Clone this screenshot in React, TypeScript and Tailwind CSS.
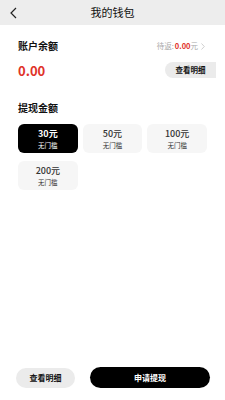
import React from "react";

const amounts = [
  { v: "30元", active: true },
  { v: "50元", active: false },
  { v: "100元", active: false },
  { v: "200元", active: false },
];

export default function App() {
  return (
    <div
      className="w-[225px] h-[400px] bg-white flex flex-col text-[#111]"
      style={{ fontFamily: '"Noto Sans CJK SC", "Noto Sans", sans-serif' }}
    >
      <div className="h-[25px] bg-[#ededed] flex items-center relative shrink-0">
        <svg className="absolute left-[9px] top-[7px]" width="9" height="12" viewBox="0 0 9 12">
          <path d="M7 1 L2 6 L7 11" fill="none" stroke="#222" strokeWidth="1.2" />
        </svg>
        <div className="w-full text-center text-[11px] leading-none">我的钱包</div>
      </div>

      <div className="flex items-center justify-between pl-[18px] pr-[20px] mt-[16px]">
        <div className="text-[10px] font-bold leading-none">账户余额</div>
        <div className="flex items-center text-[7.5px] leading-none text-[#aaa]">
          <span>待返:</span>
          <span className="text-[#e0332a] font-bold ml-[1px]">0.00</span>
          <span>元</span>
          <svg className="ml-[3px]" width="4" height="7" viewBox="0 0 4 7">
            <path d="M0.5 0.5 L3.3 3.5 L0.5 6.5" fill="none" stroke="#bbb" strokeWidth="0.7" />
          </svg>
        </div>
      </div>

      <div className="flex items-center justify-between pl-[18px] pr-[9px] mt-[11px]">
        <div className="text-[13px] font-bold text-[#e0332a] leading-none">0.00</div>
        <div className="w-[51px] h-[16px] bg-[#ebebeb] rounded-l-full flex items-center justify-center text-[7.5px] font-bold leading-none">
          查看明细
        </div>
      </div>

      <div className="pl-[18px] mt-[25px] text-[10px] font-bold leading-none">提现金额</div>

      <div className="grid grid-cols-3 gap-x-[5px] gap-y-[8px] pl-[18px] pr-[18px] mt-[11px]">
        {amounts.map((a) => (
          <div
            key={a.v}
            className={
              "h-[29px] rounded-[6px] flex flex-col items-center justify-center " +
              (a.active ? "bg-black text-white" : "bg-[#f6f6f6] text-[#333]")
            }
          >
            <div className={"text-[9px] leading-none " + (a.active ? "font-bold" : "font-medium")}>{a.v}</div>
            <div className="text-[6.5px] leading-none mt-[4px]">无门槛</div>
          </div>
        ))}
      </div>

      <div className="flex-1" />

      <div className="flex items-center pl-[16px] pr-[15px] mb-[12px] gap-[15px]">
        <div className="w-[59px] h-[20px] rounded-full bg-[#ebebeb] flex items-center justify-center text-[8px] font-bold leading-none">
          查看明细
        </div>
        <div className="flex-1 h-[21px] rounded-full bg-black text-white flex items-center justify-center text-[8px] font-bold leading-none">
          申请提现
        </div>
      </div>
    </div>
  );
}
